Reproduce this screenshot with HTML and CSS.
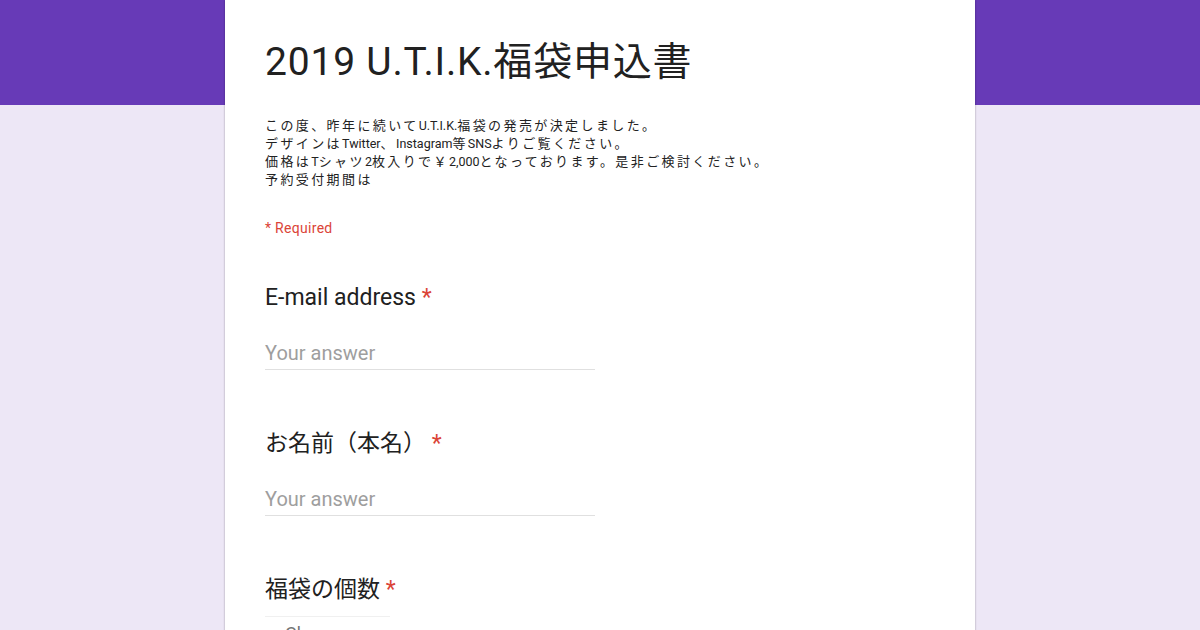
FILE: index.html
```html
<!DOCTYPE html>
<html lang="ja">
<head>
  <meta charset="UTF-8" />
  <title>2019 U.T.I.K.福袋申込書</title>
  <link rel="stylesheet" href="styles.css">
</head>
<body>

  <div class="card">
    <h1 class="title">2019 U.T.I.K.福袋申込書</h1>

    <div class="description">
      この度、昨年に続いて<span class="en">U.T.I.K.</span>福袋の発売が決定しました。<br>
      デザインは<span class="en">Twitter</span>、<span class="en">Instagram</span>等<span class="en">SNS</span>よりご覧ください。<br>
      価格は<span class="en">T</span>シャツ<span class="en">2</span>枚入りで￥<span class="en">2,000</span>となっております。是非ご検討ください。<br>
      予約受付期間は
    </div>

    <p class="required-note">* Required</p>

    <div class="question">
      <div class="question-title">E-mail address <span class="star">*</span></div>
      <div class="answer">Your answer</div>
    </div>

    <div class="question">
      <div class="question-title">お名前（本名）&nbsp;<span class="star">*</span></div>
      <div class="answer">Your answer</div>
    </div>

    <div class="question">
      <div class="question-title">福袋の個数 <span class="star">*</span></div>
      <div class="dropdown">Choose <span class="arrow"></span></div>
    </div>
  </div>

</body>
</html>
```

FILE: styles.css
```css
body {
  margin: 0;
  font-family: Roboto, "Noto Sans CJK JP", sans-serif;
  color: #202124;
  background: linear-gradient(#673ab7 0, #673ab7 105px, #ede7f6 105px);
  min-height: 630px;
  overflow: hidden;
}
.card {
  width: 750px;
  margin: 0 auto;
  padding: 40px 40px 40px 40px;
  box-sizing: border-box;
  background: #fff;
  box-shadow: 0 0 2px rgba(0, 0, 0, 0.35);
  min-height: 700px;
}
.title {
  margin: 0;
  font-size: 39px;
  font-weight: 400;
  line-height: 44px;
  letter-spacing: 0.8px;
  color: #212121;
}
.description {
  margin-top: 33px;
  font-size: 13px;
  line-height: 18px;
  letter-spacing: 2.4px;
  color: #222;
}
.description .en {
  font-size: 12.5px;
  letter-spacing: 0;
}
.required-note {
  margin: 30px 0 0 0;
  font-size: 14px;
  line-height: 18px;
  letter-spacing: 0.3px;
  color: #db4437;
}
.question {
  margin-top: 47px;
}
.question + .question {
  margin-top: 60px;
}
.question-title {
  font-size: 23px;
  line-height: 28px;
  color: #212121;
}
.star {
  color: #db4437;
}
.answer {
  width: 330px;
  margin-top: 29px;
  padding-bottom: 4px;
  font-size: 20px;
  line-height: 24px;
  color: #9e9e9e;
  border-bottom: 1px solid #e0e0e0;
}
.dropdown {
  display: inline-block;
  margin-top: 12px;
  padding: 6px 16px 10px 20px;
  font-size: 18px;
  line-height: 22px;
  color: #757575;
  border-top: 1px solid #f0f0f0;
}
.arrow {
  display: inline-block;
  margin-left: 14px;
  border-left: 5px solid transparent;
  border-right: 5px solid transparent;
  border-top: 5px solid #757575;
  vertical-align: middle;
}
```
